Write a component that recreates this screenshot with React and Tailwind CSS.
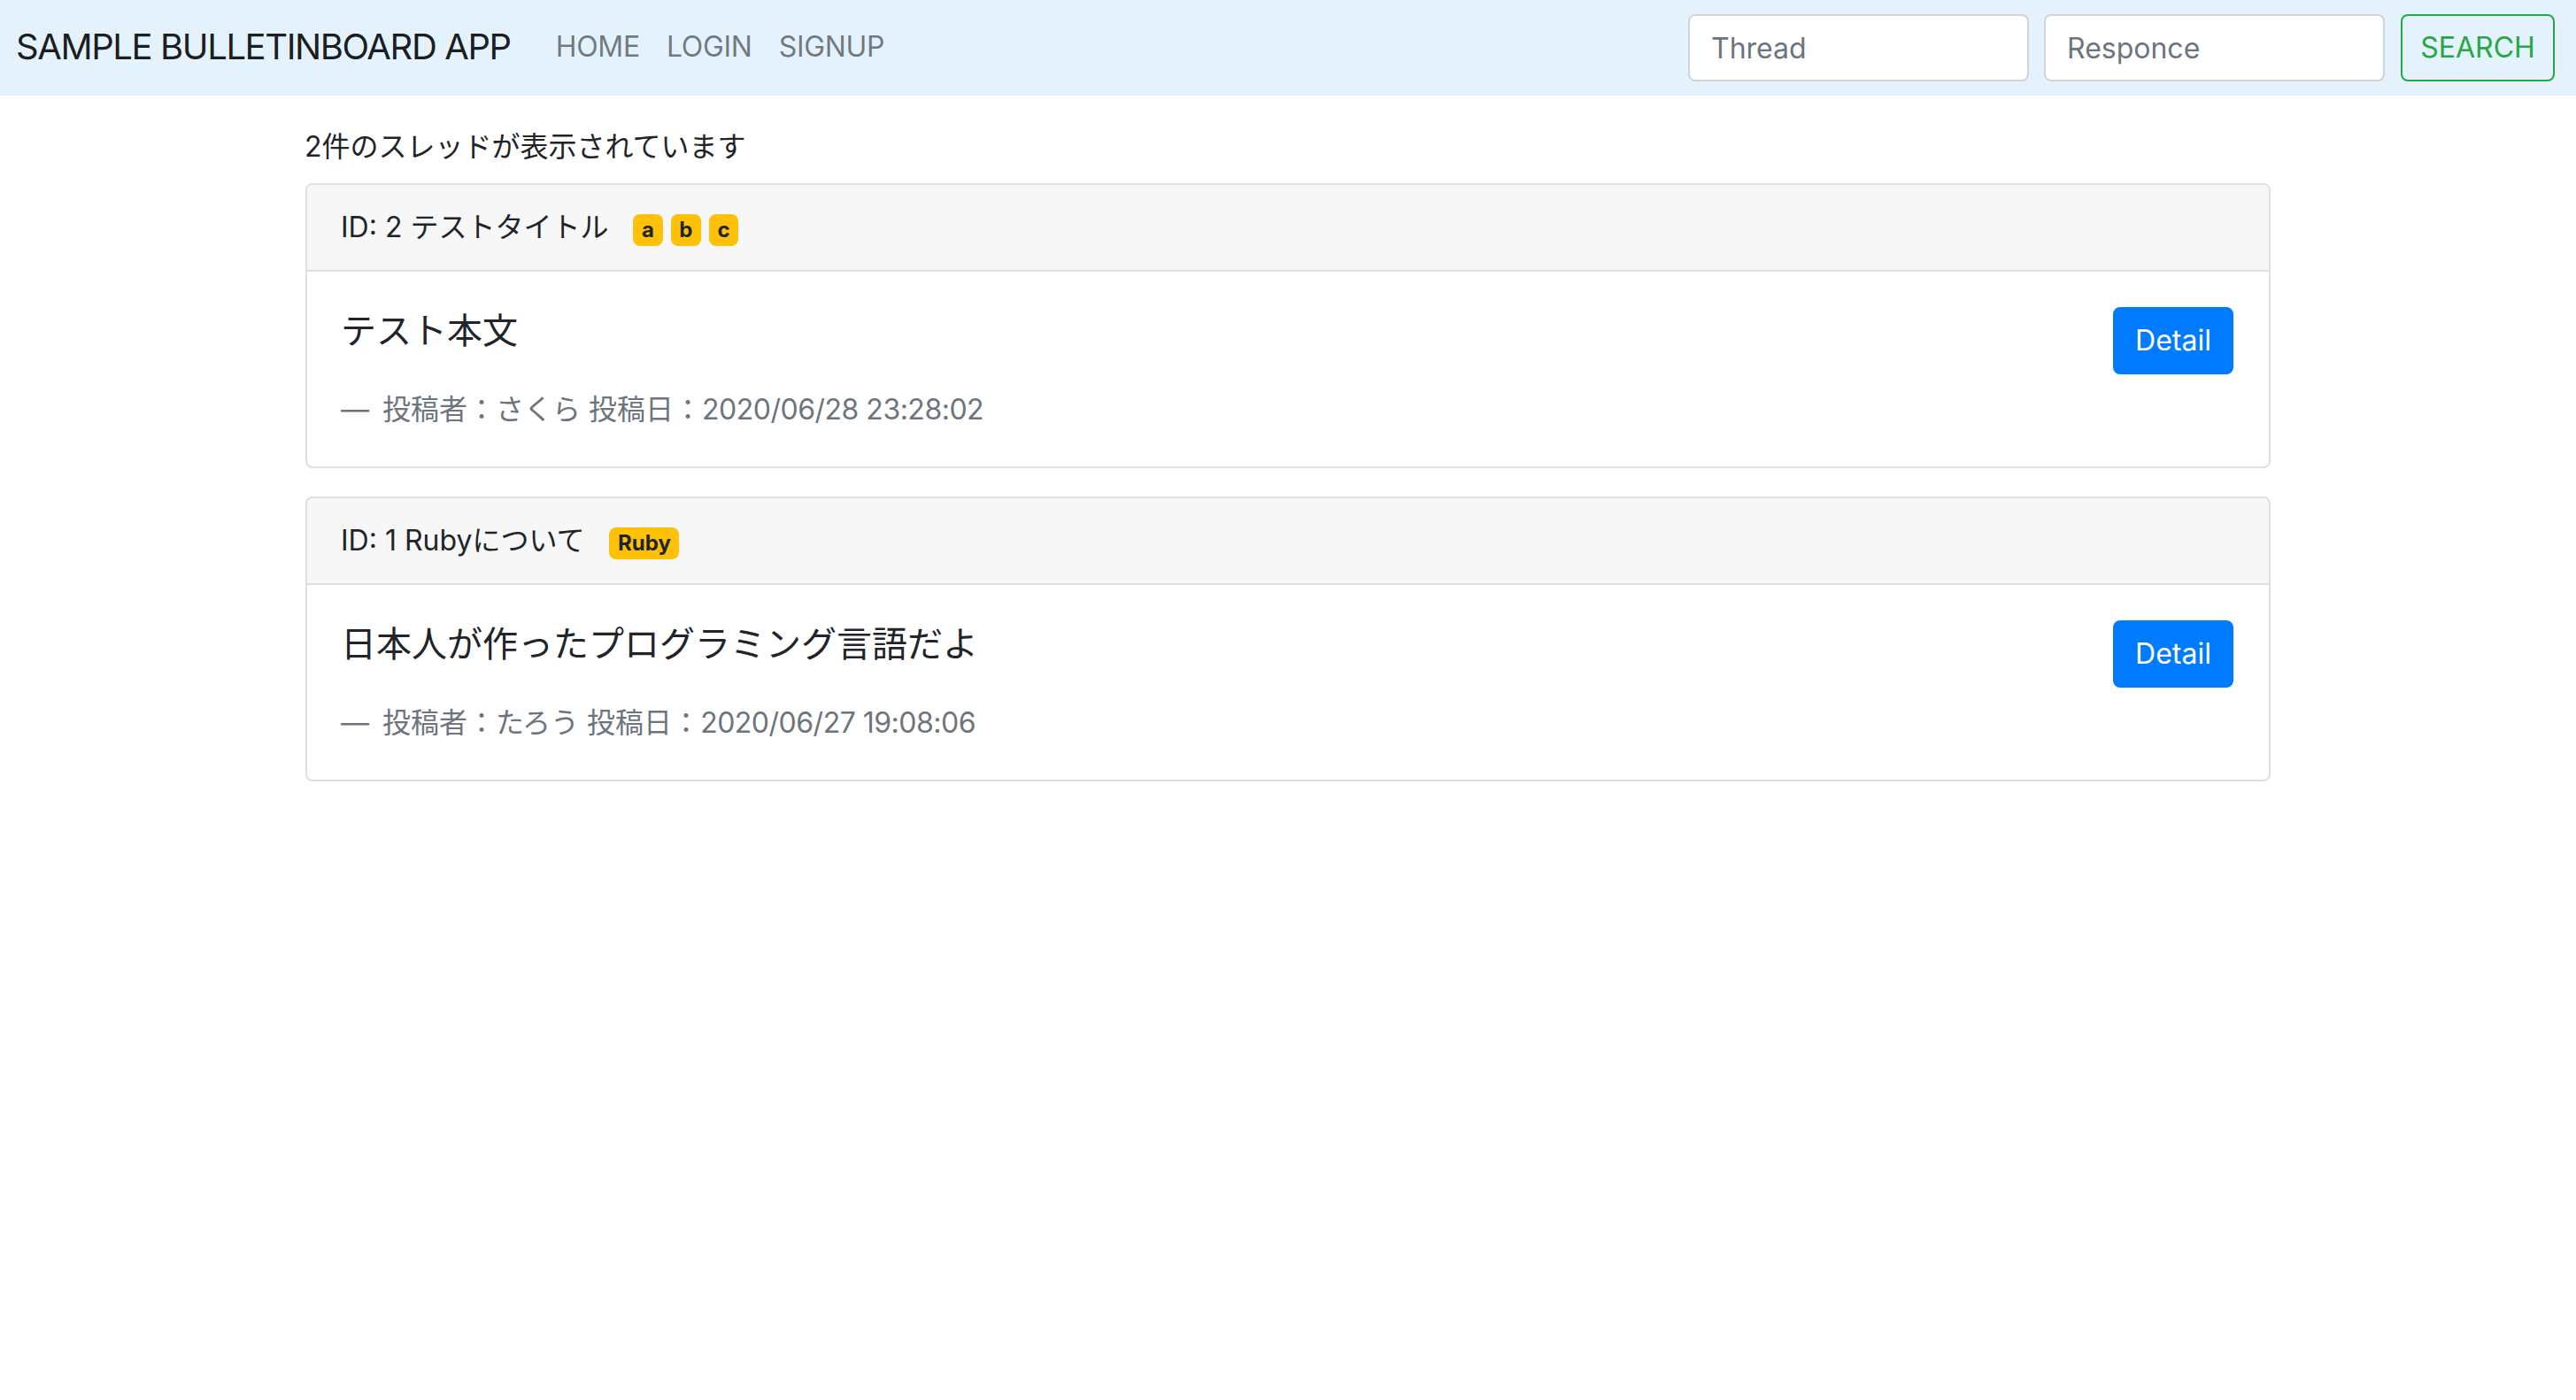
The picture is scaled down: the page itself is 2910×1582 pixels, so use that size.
import React from "react";

const threads = [
  {
    id: 2,
    title: "テストタイトル",
    tags: ["a", "b", "c"],
    body: "テスト本文",
    author: "さくら",
    date: "2020/06/28 23:28:02",
  },
  {
    id: 1,
    title: "Rubyについて",
    tags: ["Ruby"],
    body: "日本人が作ったプログラミング言語だよ",
    author: "たろう",
    date: "2020/06/27 19:08:06",
  },
];

function Card({ t }) {
  return (
    <div className="mb-[32px] overflow-hidden rounded-[8px] border-2 border-[#dfdfdf] bg-white">
      <div className="flex items-center border-b-2 border-[#dfdfdf] bg-[#f7f7f7] px-[40px] py-[24px] text-[32px] leading-[48px]">
        <span className="-ml-[2px]">
          ID: {t.id} {t.title}
        </span>
        <span className="ml-[28px] mt-[6px] flex gap-[9px]">
          {t.tags.map((g) => (
            <span
              key={g}
              className="inline-flex rounded-[8px] bg-[#ffc107] px-[9.6px] py-[6px] text-[24px] font-bold leading-[24px] text-[#212529]"
            >
              {g}
            </span>
          ))}
        </span>
      </div>
      <div className="flex items-start justify-between p-[40px]">
        <div>
          <p className="-mt-[3px] mb-[35px] -ml-[2px] text-[40px] leading-[60px]">{t.body}</p>
          <p className="-ml-[2px] text-[32px] leading-[48px] text-[#6c757d]">
            <span className="mr-[15px]">—</span>
            <span>投稿者：{t.author} 投稿日：</span>
            <span className="tracking-[-0.5px]">{t.date}</span>
          </p>
        </div>
        <button className="h-[76px] w-[136px] rounded-[8px] border-2 border-[#007bff] bg-[#007bff] text-[32px] leading-[48px] text-white">
          Detail
        </button>
      </div>
    </div>
  );
}

export default function App() {
  return (
    <div className="min-h-[1582px] bg-white font-['Inter','Noto_Sans_CJK_JP',sans-serif] text-[#212529]">
      <nav className="flex h-[108px] items-center bg-[#e3f2fd] pl-[18px] pr-[24px]">
        <a className="-mt-[2px] mr-[36px] text-[40px] leading-[60px] tracking-[-1.4px] text-black/90">
          SAMPLE BULLETINBOARD APP
        </a>
        <ul className="-mt-[2px] flex">
          {["HOME", "LOGIN", "SIGNUP"].map((n) => (
            <li key={n}>
              <a className="block px-[15px] text-[32px] leading-[48px] tracking-[-0.3px] text-black/50">{n}</a>
            </li>
          ))}
        </ul>
        <form className="ml-auto flex items-center">
          <input
            placeholder="Thread"
            className="mr-[17px] h-[76px] w-[385px] rounded-[8px] border-2 border-[#ced4da] bg-white px-[24px] text-[32px] placeholder:text-[#6c757d] outline-none"
          />
          <input
            placeholder="Responce"
            className="mr-[18px] h-[76px] w-[385px] rounded-[8px] border-2 border-[#ced4da] bg-white px-[24px] text-[32px] placeholder:text-[#6c757d] outline-none"
          />
          <button
            type="button"
            className="flex h-[76px] w-[174px] items-center justify-center rounded-[8px] border-2 border-[#28a745] text-[32px] text-[#28a745]"
          >
            SEARCH
          </button>
        </form>
      </nav>
      <main className="mx-auto w-[2220px] pt-[34px]">
        <p className="mb-[17px] -ml-[1px] text-[32px] leading-[48px]">2件のスレッドが表示されています</p>
        {threads.map((t) => (
          <Card key={t.id} t={t} />
        ))}
      </main>
    </div>
  );
}
